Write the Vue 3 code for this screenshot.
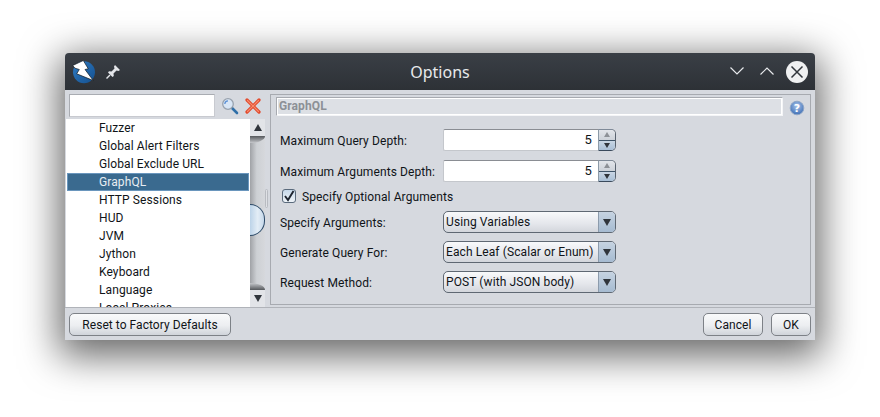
<script setup>
const items = ['Fuzzer','Global Alert Filters','Global Exclude URL','GraphQL','HTTP Sessions','HUD','JVM','Jython','Keyboard','Language','Local Proxies']
const selected = 'GraphQL'
const spinners = [
  { label: 'Maximum Query Depth:', value: '5' },
  { label: 'Maximum Arguments Depth:', value: '5' }
]
const combos = [
  { label: 'Specify Arguments:', value: 'Using Variables' },
  { label: 'Generate Query For:', value: 'Each Leaf (Scalar or Enum)' },
  { label: 'Request Method:', value: 'POST (with JSON body)' }
]
</script>

<template>
  <div class="stage">
    <div class="window">
      <header class="titlebar">
        <div class="tb-left">
          <svg class="logo" width="34" height="30" viewBox="0 0 34 30">
            <defs>
              <linearGradient id="lg" x1="0" y1="0" x2="1" y2="1">
                <stop offset="0" stop-color="#2f7cc4"/>
                <stop offset="1" stop-color="#14508f"/>
              </linearGradient>
            </defs>
            <circle cx="18" cy="15.200" r="11" fill="url(#lg)"/>
            <path d="M6.700 8.500 L17.300 3.500 L22.300 11.800 L19 12.500 L27.300 23.500 L10.700 16.800 L13.300 12.500 L9 11.200 Z" fill="#fff" stroke="#10181f" stroke-width=".7" stroke-linejoin="round"/>
          </svg>
          <svg class="pin" width="16" height="16" viewBox="0 0 16 16">
            <path d="M10 1 L15 6 L13.500 7 L11.500 6.500 L8.500 9.500 L8.800 12 L7.500 13 L3 8.500 L4 7.200 L6.500 7.500 L9.500 4.500 L9 2.500 Z" fill="#e4e6ea"/>
            <path d="M5 11 L1.500 14.500" stroke="#e4e6ea" stroke-width="1.400" fill="none"/>
          </svg>
        </div>
        <div class="tb-title">Options</div>
        <div class="tb-right">
          <svg class="chev" width="14" height="8" viewBox="0 0 14 8"><path d="M.5.5 L7 7 L13.500.5" fill="none" stroke="#e6e8eb" stroke-width="1.200"/></svg>
          <svg class="chev" width="14" height="8" viewBox="0 0 14 8"><path d="M.5 7.500 L7 1 L13.500 7.500" fill="none" stroke="#e6e8eb" stroke-width="1.200"/></svg>
          <svg class="close" width="22" height="22" viewBox="0 0 22 22">
            <circle cx="11" cy="11" r="11" fill="#eff0f1"/>
            <path d="M5.500 5.500 L16.500 16.500 M16.500 5.500 L5.500 16.500" stroke="#31363b" stroke-width="1.500"/>
          </svg>
        </div>
      </header>

      <div class="body">
        <aside class="side">
          <div class="search-row">
            <div class="search-input"></div>
            <svg class="ic-search" width="18" height="18" viewBox="0 0 18 18">
              <path d="M10.500 10.500 L16 16" stroke="#2f6fa8" stroke-width="2.600" stroke-linecap="round"/>
              <circle cx="7" cy="7" r="5.300" fill="#d8e6f6" stroke="#98a2ae" stroke-width="1.300"/>
              <path d="M3.800 7 A3.300 3.300 0 0 1 7 3.800" fill="none" stroke="#5f93d6" stroke-width="1.300"/>
            </svg>
            <svg class="ic-x" width="16" height="16" viewBox="0 0 16 16">
              <path d="M2 2 L14 14 M14 2 L2 14" stroke="#e2492c" stroke-width="3.200" stroke-linecap="round"/>
              <path d="M2.500 2.500 L13.500 13.500 M13.500 2.500 L2.500 13.500" stroke="#f78a6b" stroke-width="1.200" stroke-linecap="round"/>
            </svg>
          </div>
          <div class="tree">
            <ul class="list">
              <li v-for="item in items" :key="item" :class="['row', { sel: item === selected }]">{{ item }}</li>
            </ul>
            <div class="scroll">
              <div class="sb-btn"><span class="tri up"></span></div>
              <div class="sb-track">
                <div class="sb-cap top"></div>
                <div class="sb-thumb"></div>
                <div class="sb-cap bottom"></div>
              </div>
              <div class="sb-btn"><span class="tri down"></span></div>
            </div>
          </div>
        </aside>

        <div class="divider"><span class="grip"></span></div>

        <main class="panel">
          <div class="panel-head">
            <div class="panel-title">GraphQL</div>
            <svg class="help" width="16" height="16" viewBox="0 0 16 16">
              <defs>
                <radialGradient id="hg" cx="50%" cy="35%" r="65%">
                  <stop offset="0" stop-color="#a9c4ea"/>
                  <stop offset="1" stop-color="#3f6fb5"/>
                </radialGradient>
              </defs>
              <circle cx="8" cy="8" r="6.800" fill="url(#hg)" stroke="#8fa6c6" stroke-width="1"/>
              <text x="8" y="11.800" text-anchor="middle" class="help-q">?</text>
            </svg>
          </div>

          <div class="form">
            <div v-for="s in spinners" :key="s.label" class="field">
              <label class="lbl">{{ s.label }}</label>
              <div class="spinner">
                <div class="spin-val">{{ s.value }}</div>
                <div class="spin-btns">
                  <div class="spin-btn"><span class="tri mini up dim"></span></div>
                  <div class="spin-btn lower"><span class="tri mini down"></span></div>
                </div>
              </div>
            </div>

            <div class="check-row">
              <span class="check">
                <svg width="12" height="12" viewBox="0 0 12 12"><path d="M2 6 L5 10 L10.500 1" fill="none" stroke="#1e2530" stroke-width="1.900"/></svg>
              </span>
              <span class="check-label">Specify Optional Arguments</span>
            </div>

            <div v-for="c in combos" :key="c.label" class="field combo-field">
              <label class="lbl">{{ c.label }}</label>
              <div class="combo">
                <div class="combo-val">{{ c.value }}</div>
                <div class="combo-btn"><span class="tri"></span></div>
              </div>
            </div>
          </div>
        </main>
      </div>

      <footer class="footer">
        <button class="btn reset">Reset to Factory Defaults</button>
        <div class="foot-right">
          <button class="btn cancel">Cancel</button>
          <button class="btn ok">OK</button>
        </div>
      </footer>
    </div>
  </div>
</template>

<style>
html, body { margin: 0; background: #fff; overflow: hidden; }
</style>

<style scoped>
.stage {
  width: 880px;
  height: 417px;
  padding: 53px 0 0 65px;
  box-sizing: border-box;
  font-family: Roboto, "Liberation Sans", sans-serif;
  font-size: 12px;
  letter-spacing: .1px;
  color: #101418;
}
.window {
  width: 750px;
  height: 287px;
  background: #d6d9df;
  border-radius: 4px 4px 0 0;
  box-shadow: 0 10px 38px 6px rgba(0, 0, 0, .6);
  display: flex;
  flex-direction: column;
  overflow: hidden;
}
.titlebar {
  height: 37px;
  flex: none;
  background: linear-gradient(#3a3f46, #2d3136);
  display: grid;
  grid-template-columns: 1fr auto 1fr;
  align-items: center;
  color: #e8eaec;
}
.tb-left { display: flex; align-items: center; padding-left: 1px; }
.logo { margin-right: 5px; }
.tb-title { font-family: "Noto Sans", Roboto, sans-serif; font-size: 16px; letter-spacing: 0; }
.tb-right {
  display: flex;
  align-items: center;
  justify-content: flex-end;
  padding-right: 7px;
}
.chev { margin-right: 16px; margin-top: -1px; }
.chev + .chev { margin-right: 12px; }
.body { flex: 1; display: flex; min-height: 0; }
.side { width: 200px; flex: none; display: flex; flex-direction: column; padding-left: 1px; box-sizing: border-box; }
.search-row { height: 29px; flex: none; display: flex; align-items: flex-start; padding: 4px 0 0 3px; box-sizing: border-box; }
.search-input {
  width: 146px;
  height: 23px;
  box-sizing: border-box;
  background: #fff;
  border: 1px solid #a9acb2;
  border-bottom-color: #c8cad0;
  border-right-color: #c8cad0;
}
.ic-search { margin: 3px 0 0 6px; }
.ic-x { margin: 4px 0 0 6px; }
.tree { flex: 1; display: flex; min-height: 0; }
.list {
  list-style: none;
  margin: 0;
  padding: 0;
  width: 184px;
  flex: none;
  background: #fff;
  overflow: hidden;
}
.row { height: 18px; line-height: 18px; padding-left: 33px; box-sizing: border-box; white-space: nowrap; }
.row.sel {
  margin: 0 1px;
  padding-left: 32px;
  background: #3a6a8f;
  color: #e8edf2;
  outline: 1px solid #6a96bd;
  outline-offset: -1px;
}
.scroll { width: 15px; flex: none; display: flex; flex-direction: column; background: #dee0e5; }
.sb-btn { height: 17px; flex: none; display: flex; align-items: center; justify-content: center; background: #e2e4e8; }
.sb-track {
  flex: 1;
  position: relative;
  background: linear-gradient(90deg, #a0a2a6, #cdd0d4 45%, #d6d8dc);
  display: flex;
  flex-direction: column;
  justify-content: space-between;
}
.sb-cap { height: 7px; }
.sb-cap.top { border-radius: 0 0 100% 0 / 0 0 100% 0; background: linear-gradient(#55585c, #c6c8cc); }
.sb-cap.bottom { border-radius: 0 100% 0 0 / 0 100% 0 0; background: linear-gradient(#c6c8cc, #55585c); }
.sb-thumb {
  position: absolute;
  left: 0;
  top: 68px;
  width: 15px;
  height: 32px;
  box-sizing: border-box;
  border: 1px solid #2c4a68;
  border-left: 0;
  border-radius: 0 16px 16px 0;
  background: linear-gradient(90deg, #bcd3e8, #e3edf6 55%, #c6d8ea);
}
.tri { width: 0; height: 0; display: block; border-left: 4px solid transparent; border-right: 4px solid transparent; }
.tri:not(.up) { border-top: 7px solid #30353c; }
.tri.up { border-bottom: 7px solid #30353c; }
.tri.mini { border-left-width: 3.500px; border-right-width: 3.500px; }
.tri.mini.up { border-bottom-width: 5px; }
.tri.mini.down { border-top-width: 5px; }
.tri.dim { border-bottom-color: #8d9197; }
.divider { width: 5px; flex: none; position: relative; }
.grip {
  position: absolute;
  left: 0;
  top: 99px;
  width: 3px;
  height: 19px;
  box-sizing: border-box;
  border: 1px solid #b8bbc1;
  border-radius: 2px;
  background: #dfe1e5;
}
.panel {
  flex: 1;
  margin: 4px 4px 0 0;
  box-sizing: border-box;
  border: 1px solid #a7aab0;
  height: 211px;
  padding: 2px 0 0 5px;
}
.panel-head { display: flex; align-items: flex-start; height: 19px; }
.panel-title {
  width: 507px;
  height: 19px;
  line-height: 17px;
  box-sizing: border-box;
  flex: none;
  background: #dde0e5;
  border: 1px solid #a7aab0;
  border-right-color: #f4f5f7;
  border-bottom-color: #f4f5f7;
  outline: 1px solid #fff;
  outline-offset: -2px;
  padding-left: 2px;
  font-weight: 700;
  color: #8c9096;
}
.help { margin-left: 6px; margin-top: 3px; }
.help-q { font: 700 11px "DejaVu Sans", sans-serif; fill: #fff; }
.form { padding: 13px 0 0 4px; width: 336px; box-sizing: border-box; }
.field { display: grid; grid-template-columns: 163px 173px; align-items: center; height: 22px; margin-bottom: 9px; }
.lbl { white-space: nowrap; padding-top: 1px; }
.spinner {
  height: 22px;
  box-sizing: border-box;
  display: flex;
  background: #fff;
  border: 1px solid #9a9da3;
  border-right: 0;
  border-top-color: #8a8d93;
  border-left-color: #c4c7cc;
  border-bottom-color: #c4c7cc;
  border-radius: 2px 5px 5px 2px;
}
.spin-val { flex: 1; text-align: right; line-height: 20px; padding-right: 6px; font-size: 13px; }
.spin-btns {
  width: 18px;
  flex: none;
  margin: -1px 0;
  display: flex;
  flex-direction: column;
  box-sizing: border-box;
  border: 1px solid #556;
  border-color: #7f8a98 #58626e #3a4a5c #8c9aa8;
  border-radius: 0 5px 5px 0;
  overflow: hidden;
}
.spin-btn {
  flex: 1;
  display: flex;
  align-items: center;
  justify-content: center;
  background: linear-gradient(#e2e5ea, #cdd2d9);
}
.spin-btn.lower { background: linear-gradient(#c9d6e4, #a9bfd6); border-top: 1px solid #3f5468; }
.check-row { display: flex; align-items: center; height: 20px; margin: -4px 0 4px 2px; }
.check {
  width: 14px;
  height: 14px;
  box-sizing: border-box;
  border: 1px solid #5a6a7c;
  border-radius: 3px;
  background: linear-gradient(#c6d8ea, #eef3f8);
  display: flex;
  align-items: center;
  justify-content: center;
  margin: -2px 6px 0 0;
}
.check-label { white-space: nowrap; }
.combo-field { margin-bottom: 8px; }
.combo {
  height: 22px;
  box-sizing: border-box;
  display: flex;
  border: 1px solid #5f6873;
  border-radius: 5px;
  overflow: hidden;
  background: linear-gradient(#f8f9fb, #e4e6eb 60%, #d3d6dc);
}
.combo-val { flex: 1; line-height: 20px; padding-left: 2px; white-space: nowrap; }
.combo-btn {
  width: 16px;
  flex: none;
  display: flex;
  align-items: center;
  justify-content: center;
  background: linear-gradient(#c6d3e1, #a6bbd1);
  border-left: 1px solid #8c9bac;
}
.footer {
  height: 33px;
  flex: none;
  box-sizing: border-box;
  display: flex;
  justify-content: space-between;
  align-items: flex-start;
  padding: 5px 4px 0 4px;
  border-top: 1px solid #b0b3b9;
}
.foot-right { display: flex; gap: 8px; }
.btn {
  height: 23px;
  box-sizing: border-box;
  border: 1px solid #7d8187;
  border-radius: 5px;
  background: linear-gradient(#f9fafb, #eceef1 55%, #d0d4da);
  font: 12px Roboto, sans-serif;
  letter-spacing: .05px;
  color: #101418;
  padding: 0;
}
.reset { width: 162px; }
.cancel { width: 60px; }
.ok { width: 40px; }
</style>
